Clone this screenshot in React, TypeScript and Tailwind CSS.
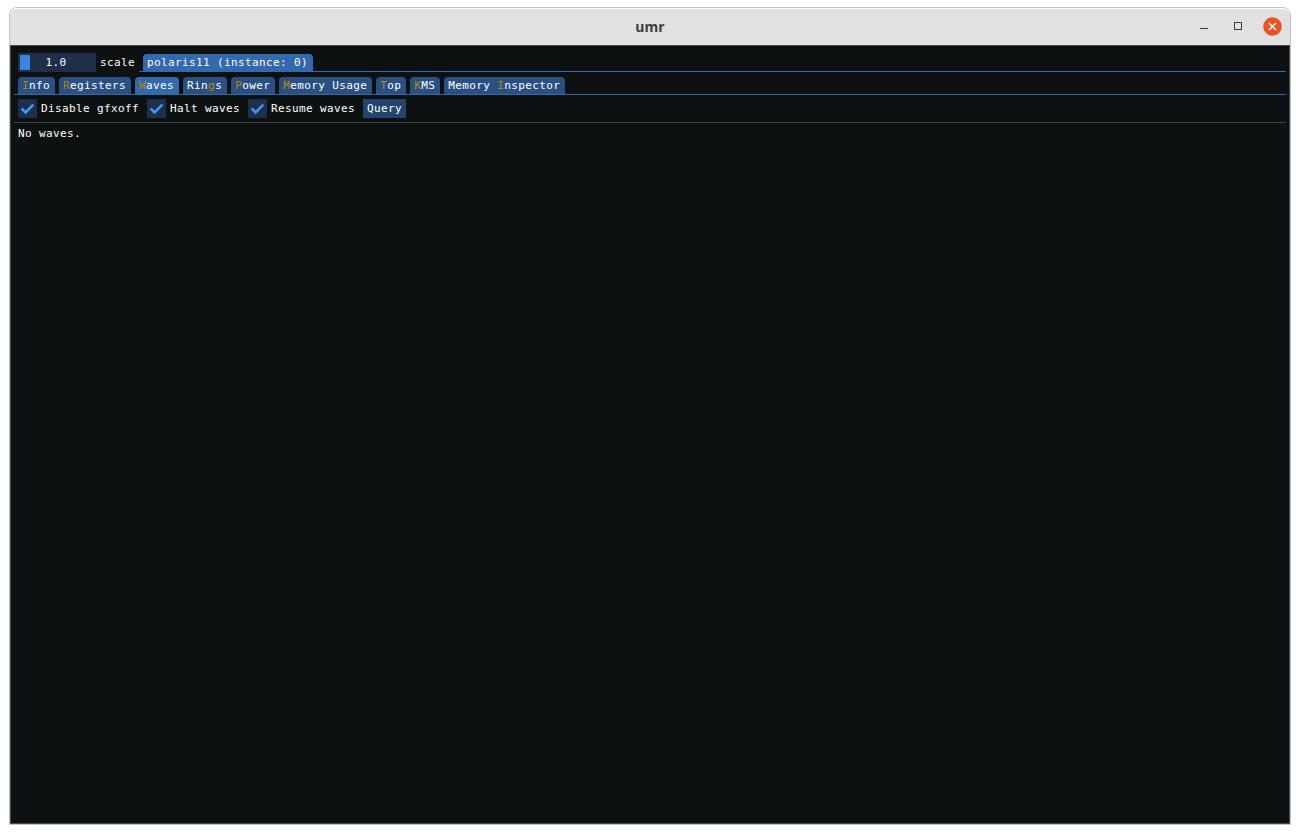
import React from 'react';

const tabs = [
  { label: 'Info', hotkey: 0 },
  { label: 'Registers', hotkey: 0 },
  { label: 'Waves', hotkey: 0, active: true },
  { label: 'Rings', hotkey: 3 },
  { label: 'Power', hotkey: 0 },
  { label: 'Memory Usage', hotkey: 0 },
  { label: 'Top', hotkey: 0 },
  { label: 'KMS', hotkey: 0 },
  { label: 'Memory Inspector', hotkey: 7 },
];

const options = ['Disable gfxoff', 'Halt waves', 'Resume waves'];

const TitleBar = () => (
  <header className="grid h-[37px] shrink-0 grid-cols-[1fr_auto_1fr] items-center rounded-t-[7px] border-t border-white bg-[#e1e1e1]">
    <div />
    <h1 className="font-['Open_Sans',sans-serif] text-[14px] leading-none font-bold text-[#3d3d3d]">umr</h1>
    <div className="flex items-center justify-end pr-2 pb-[2px]">
      <svg className="mr-[25px] h-[9px] w-[9px]" viewBox="0 0 9 9" shapeRendering="crispEdges">
        <path d="M0 6h8v1H0z" fill="#3d3d3d" />
      </svg>
      <svg className="mr-[21px] h-2 w-2" viewBox="0 0 8 8" shapeRendering="crispEdges">
        <path d="M.5.5h7v7h-7z" fill="none" stroke="#3d3d3d" />
      </svg>
      <svg className="h-[19px] w-[19px]" viewBox="0 0 19 19">
        <circle cx="9.5" cy="9.5" r="9.3" fill="#e95420" />
        <path d="M6 6l7 7M13 6l-7 7" stroke="#fff" strokeWidth="1.4" />
      </svg>
    </div>
  </header>
);

const Tab = ({ label, hotkey, active }: { label: string; hotkey?: number; active?: boolean }) => (
  <button
    className={`h-[17px] rounded-t-[4px] pr-[5px] pl-1 leading-[18px] ${active ? 'bg-[#3369ad]' : 'bg-[#2a4f83]'}`}
  >
    {hotkey === undefined ? (
      label
    ) : (
      <>
        {label.slice(0, hotkey)}
        <span className="text-[#b58900]">{label[hotkey]}</span>
        {label.slice(hotkey + 1)}
      </>
    )}
  </button>
);

const Checkbox = ({ label }: { label: string }) => (
  <label className="flex h-[19px] gap-1 leading-[20px]">
    <span className="h-[19px] w-[19px] bg-[#1d2f49]">
      <svg className="h-[19px] w-[19px]" viewBox="0 0 19 19">
        <path d="M3.65 9.5l3.9 3.9 7.8-7.8" fill="none" stroke="#4296fa" strokeWidth="2.6" />
      </svg>
    </span>
    {label}
  </label>
);

const App = () => {
  return (
    <div className="h-[834px] w-[1300px] bg-white pt-[7px] pl-[9px]">
      <div className="flex h-[818px] w-[1282px] flex-col rounded-t-lg border border-[#c2c2c2]">
        <TitleBar />
        <main className="flex-1 border border-t-0 border-[#46474b] bg-[#0d1111] font-['DejaVu_Sans_Mono',monospace] text-[11px] tracking-[0.378px] whitespace-pre text-white">
          <div className="h-px bg-[#46474b]" />
          <div className="flex h-[26px] pt-[7px] pl-[7px]">
            <div className="relative h-[19px] w-[78px] bg-[#1d2f49] pr-[2px] text-center leading-[20px]">
              <div className="absolute top-[2px] left-[2px] h-[15px] w-[10px] bg-[#3d85e0]" />
              1.0
            </div>
            <span className="ml-1 leading-[20px]">scale</span>
            <div className="mr-[3px] ml-1 flex h-[19px] flex-1 items-end border-b border-[#3369ad] pl-1">
              <Tab label="polaris11 (instance: 0)" active />
            </div>
          </div>
          <nav className="mx-[3px] mt-[5px] flex h-[18px] gap-1 border-b border-[#3369ad] pl-1">
            {tabs.map((tab) => (
              <Tab key={tab.label} {...tab} />
            ))}
          </nav>
          <div className="mt-1 flex gap-2 pl-[7px]">
            {options.map((option) => (
              <Checkbox key={option} label={option} />
            ))}
            <button className="h-[19px] bg-[#23456d] px-1 leading-[20px]">Query</button>
          </div>
          <div className="mx-[3px] mt-1 h-px bg-[#404146]" />
          <p className="mt-[3px] pl-[7px] leading-[15px]">No waves.</p>
        </main>
      </div>
    </div>
  );
};

export default App;
